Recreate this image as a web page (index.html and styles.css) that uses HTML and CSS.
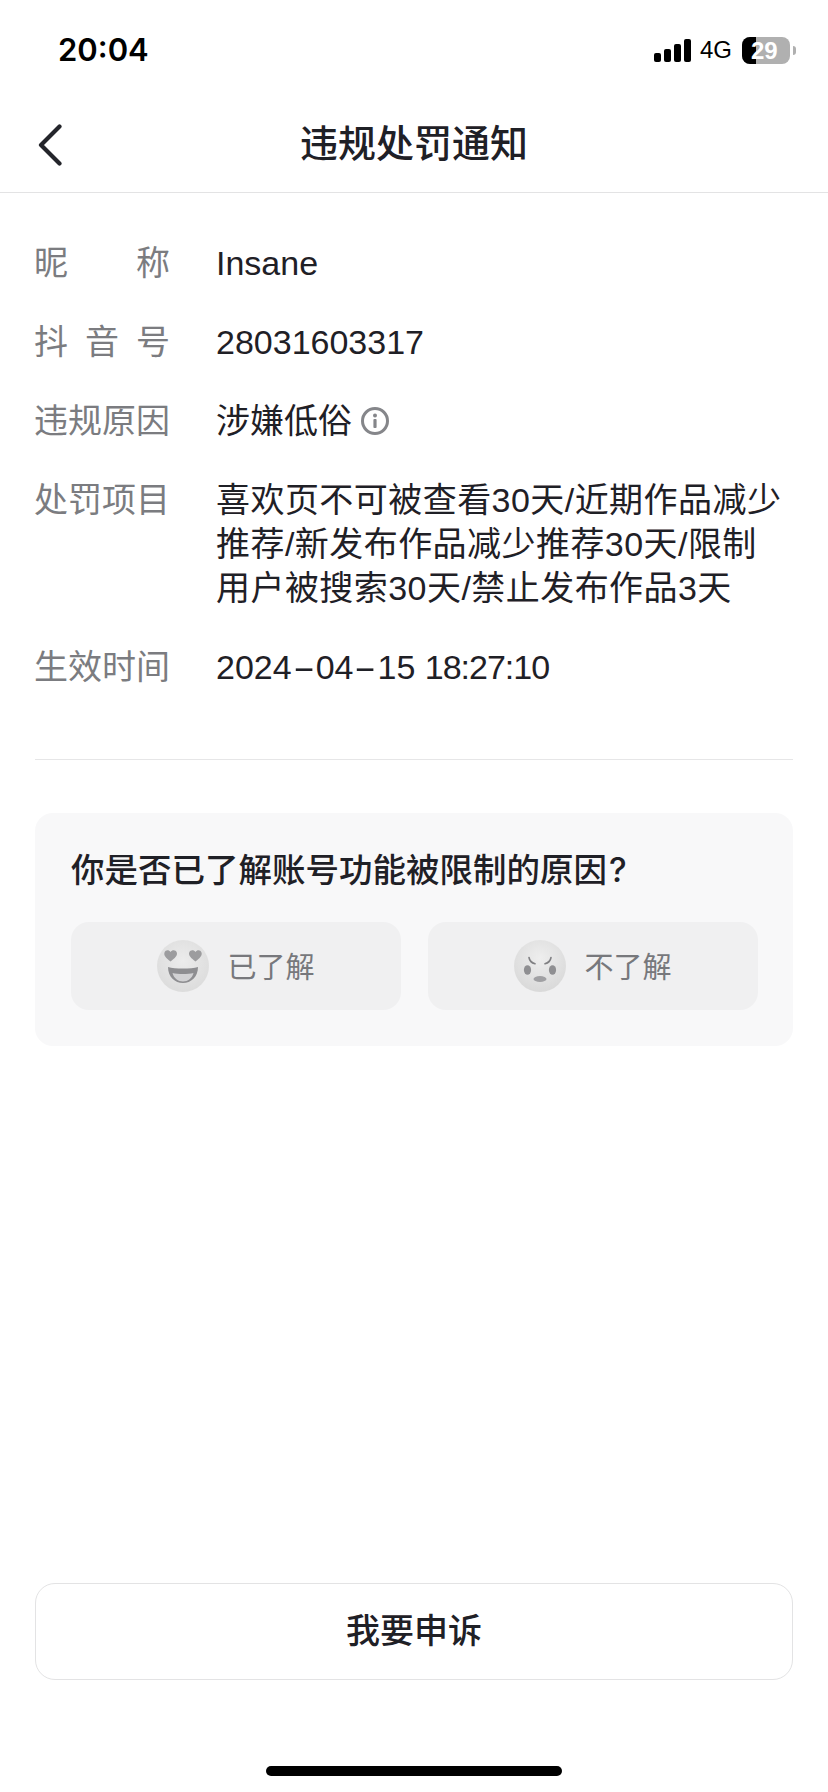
FILE: index.html
```html
<!DOCTYPE html>
<html lang="zh-CN">
<head>
    <meta charset="UTF-8">
    <meta name="viewport" content="width=device-width, initial-scale=1.0">
    <title>违规处罚通知</title>
    <link rel="stylesheet" href="styles.css">
</head>
<body>

<div class="page">
    <!-- Status bar -->
    <div class="status-bar">
        <span class="time">20:04</span>
        <div class="status-icons">
            <div class="signal">
                <i class="bar-1"></i><i class="bar-2"></i><i class="bar-3"></i><i class="bar-4"></i>
            </div>
            <span class="network">4G</span>
            <div class="battery">
                <div class="battery-level"></div>
                <span class="battery-text">29</span>
            </div>
            <div class="battery-tip"></div>
        </div>
    </div>

    <!-- Title bar -->
    <div class="nav-bar">
        <svg class="back-icon" width="24" height="42" viewBox="0 0 24 42">
            <path d="M21.5 2.5 L3 21 L21.5 39.5" fill="none" stroke="#24252b" stroke-width="4.2" stroke-linecap="round" stroke-linejoin="round"/>
        </svg>
        <h1 class="nav-title">违规处罚通知</h1>
    </div>

    <!-- Details -->
    <div class="details">
        <div class="row">
            <div class="label">昵称</div>
            <div class="value">Insane</div>
        </div>
        <div class="row">
            <div class="label">抖音号</div>
            <div class="value">28031603317</div>
        </div>
        <div class="row">
            <div class="label">违规原因</div>
            <div class="value value-reason">
                涉嫌低俗
                <svg class="info-icon" width="30" height="30" viewBox="0 0 30 30">
                    <circle cx="15" cy="15" r="12.5" fill="none" stroke="#85868a" stroke-width="3"/>
                    <circle cx="15" cy="9.5" r="2" fill="#85868a"/>
                    <rect x="13.4" y="13" width="3.2" height="9" rx="1" fill="#85868a"/>
                </svg>
            </div>
        </div>
        <div class="row">
            <div class="label">处罚项目</div>
            <div class="value value-items">喜欢页不可被查看30天/近期作品减少推荐/新发布作品减少推荐30天/限制用户被搜索30天/禁止发布作品3天</div>
        </div>
        <div class="row">
            <div class="label">生效时间</div>
            <div class="value">2024<span class="dash">-</span>04<span class="dash">-</span>15 <span class="clock">18:27:10</span></div>
        </div>
    </div>

    <div class="divider"></div>

    <!-- Feedback card -->
    <div class="card">
        <h2 class="card-title">你是否已了解账号功能被限制的原因<span class="card-mark">?</span></h2>
        <div class="choices">
            <div class="choice">
                <svg class="emoji" width="52" height="52" viewBox="0 0 52 52">
                    <defs>
                        <radialGradient id="faceHappy" cx="50%" cy="40%" r="60%">
                            <stop offset="0%" stop-color="#ececec"/>
                            <stop offset="100%" stop-color="#dcdcdc"/>
                        </radialGradient>
                    </defs>
                    <circle cx="26" cy="26" r="26" fill="url(#faceHappy)"/>
                    <path d="M13.5 21.5 C9 18 6.5 15.5 7.5 12.5 C8.5 9.5 12 9.5 13.5 12 C15 9.5 18.8 9.5 19.8 12.5 C20.8 15.5 18 18 13.5 21.5 Z" fill="#9c9c9e"/>
                    <path d="M38.5 21.5 C34 18 31.2 15.5 32.2 12.5 C33.2 9.5 37 9.5 38.5 12 C40 9.5 43.5 9.5 44.5 12.5 C45.5 15.5 43 18 38.5 21.5 Z" fill="#9c9c9e"/>
                    <path d="M11 27 C18 29 34 29 41 27 C41 37 34 43 26 43 C18 43 11 37 11 27 Z" fill="#8e8e91"/>
                    <path d="M15.5 33 C21 34.4 31 34.4 36.5 33 C35 38.5 31 41.5 26 41.5 C21 41.5 17 38.5 15.5 33 Z" fill="#d2d2d4"/>
                </svg>
                <span class="choice-text">已了解</span>
            </div>
            <div class="choice">
                <svg class="emoji" width="52" height="52" viewBox="0 0 52 52">
                    <defs>
                        <radialGradient id="faceAngry" cx="50%" cy="35%" r="65%">
                            <stop offset="0%" stop-color="#eeeeee"/>
                            <stop offset="100%" stop-color="#d9d9d9"/>
                        </radialGradient>
                    </defs>
                    <circle cx="26" cy="26" r="26" fill="url(#faceAngry)"/>
                    <path d="M15 17.5 C15.5 20.5 17.5 22.8 21 23.8" fill="none" stroke="#808083" stroke-width="1.6" stroke-linecap="round"/>
                    <path d="M37 17.5 C36.5 20.5 34.5 22.8 31 23.8" fill="none" stroke="#808083" stroke-width="1.6" stroke-linecap="round"/>
                    <ellipse cx="13.5" cy="30" rx="3.6" ry="4.8" fill="#8f8f92"/>
                    <ellipse cx="38.5" cy="30" rx="3.6" ry="4.8" fill="#8f8f92"/>
                    <ellipse cx="26" cy="39" rx="6.5" ry="3" fill="#a0a0a3"/>
                </svg>
                <span class="choice-text">不了解</span>
            </div>
        </div>
    </div>

    <!-- Appeal -->
    <div class="appeal">我要申诉</div>

    <div class="home-area">
        <div class="home-bar"></div>
    </div>
</div>

</body>
</html>
```

FILE: styles.css
```css
* {
    box-sizing: border-box;
}
body {
    margin: 0;
    padding: 0;
    background-color: #fff;
    color: #1f2026;
    font-family: "Liberation Sans", "Noto Sans CJK SC", sans-serif;
}
.page {
    display: flex;
    flex-direction: column;
    width: 828px;
    height: 1792px;
    overflow: hidden;
}

/* Status bar */
.status-bar {
    display: flex;
    justify-content: space-between;
    align-items: center;
    height: 100px;
    padding: 0 32px 0 58px;
}
.time {
    margin-bottom: 2px;
    font-family: Inter, sans-serif;
    font-size: 31px;
    font-weight: 600;
    color: #000;
}
.status-icons {
    display: flex;
    align-items: center;
}
.signal {
    display: flex;
    align-items: flex-end;
    gap: 3px;
    height: 23px;
    margin-right: 9px;
}
.signal i {
    display: block;
    width: 7px;
    background-color: #000;
    border-radius: 2px;
}
.bar-1 {
    height: 9px;
}
.bar-2 {
    height: 13px;
}
.bar-3 {
    height: 18px;
}
.bar-4 {
    height: 23px;
}
.network {
    font-family: "Liberation Sans", sans-serif;
    font-size: 24px;
    color: #000;
    margin-right: 10px;
}
.battery {
    position: relative;
    width: 48px;
    height: 27px;
    background-color: #b0b0b0;
    border-radius: 8px;
    overflow: hidden;
}
.battery-level {
    width: 14px;
    height: 100%;
    background-color: #000;
}
.battery-text {
    position: absolute;
    top: 0;
    left: 9px;
    font-family: "Liberation Sans", sans-serif;
    font-size: 24px;
    font-weight: 700;
    line-height: 27px;
    color: #fff;
}
.battery-tip {
    width: 3px;
    height: 9px;
    margin-left: 3px;
    background-color: #b0b0b0;
    border-radius: 0 3px 3px 0;
}

/* Title bar */
.nav-bar {
    display: flex;
    justify-content: center;
    align-items: center;
    position: relative;
    height: 93px;
    padding-bottom: 12px;
    border-bottom: 1px solid #e3e3e4;
}
.back-icon {
    position: absolute;
    left: 38px;
    top: 24px;
}
.nav-title {
    margin: 0;
    font-size: 38px;
    font-weight: 500;
    color: #1f2026;
}

/* Details */
.details {
    display: flex;
    flex-direction: column;
    gap: 35px;
    padding: 48px 42px 0 34px;
}
.row {
    display: flex;
    font-size: 34px;
    line-height: 44px;
}
.label {
    flex: none;
    width: 136px;
    margin-right: 46px;
    color: #7b7c80;
    text-align: justify;
    text-align-last: justify;
}
.value {
    flex: 1;
    color: #1f2026;
    word-break: break-all;
}
.value-reason {
    display: flex;
    align-items: center;
    gap: 8px;
}
.value-items {
    letter-spacing: 0.45px;
}
.info-icon {
    flex: none;
}
.dash {
    display: inline-block;
    width: 24px;
    text-align: center;
    transform: scaleX(2);
}
.clock {
    letter-spacing: -1px;
}
.divider {
    height: 1px;
    margin: 70px 35px 0;
    background-color: #e6e6e7;
}

/* Feedback card */
.card {
    margin: 53px 35px 0;
    padding: 35px 35px 36px 36px;
    background-color: #f8f8f9;
    border-radius: 18px;
}
.card-title {
    margin: 0 0 29px;
    font-size: 33.5px;
    font-weight: 500;
    line-height: 44px;
    color: #1f2026;
}
.card-mark {
    margin-left: 2px;
    font-family: Inter, sans-serif;
}
.choices {
    display: flex;
    gap: 27px;
}
.choice {
    display: flex;
    flex: 1;
    justify-content: center;
    align-items: center;
    gap: 18px;
    height: 88px;
    background-color: #f0f0f1;
    border-radius: 18px;
}
.emoji {
    flex: none;
    filter: blur(0.7px);
}
.choice-text {
    margin-bottom: 2px;
    font-size: 29px;
    color: #77787c;
}

/* Appeal */
.appeal {
    display: flex;
    justify-content: center;
    align-items: center;
    height: 97px;
    margin: auto 35px 0;
    padding-bottom: 7px;
    border: 1px solid #e3e3e4;
    border-radius: 20px;
    font-size: 34px;
    font-weight: 500;
    color: #1f2026;
}
.home-area {
    display: flex;
    justify-content: center;
    height: 112px;
    padding-top: 86px;
}
.home-bar {
    width: 296px;
    height: 10px;
    background-color: #000;
    border-radius: 5px;
}
```
